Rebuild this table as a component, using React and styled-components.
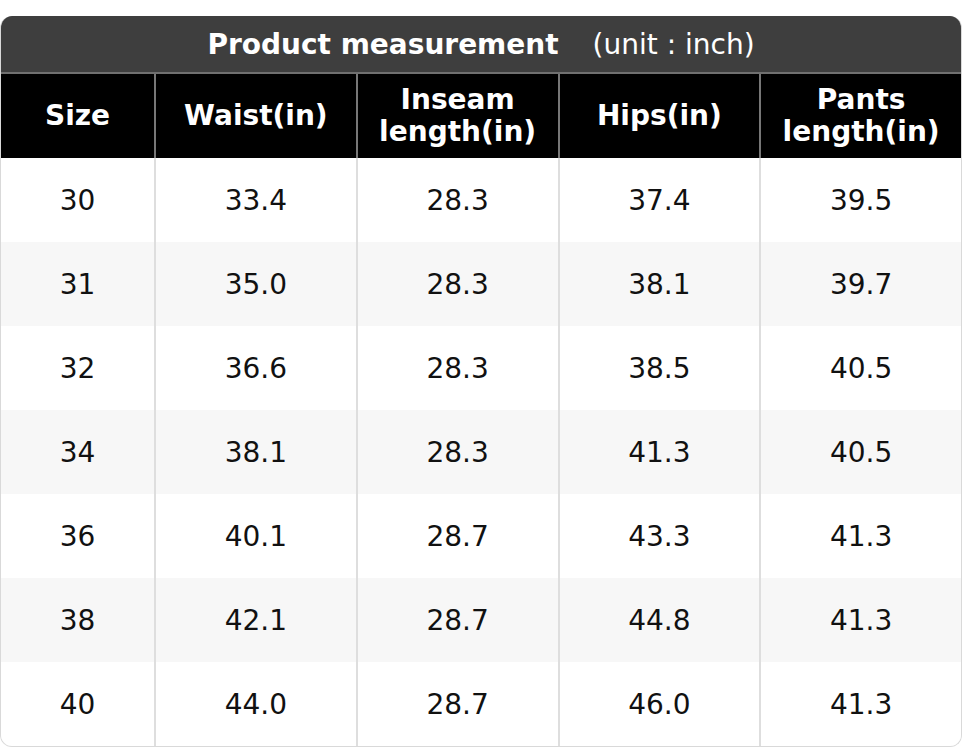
import React from "react";
import styled, { createGlobalStyle } from "styled-components";

const GlobalStyle = createGlobalStyle`
  body {
    margin: 0;
    background: #ffffff;
    font-family: "DejaVu Sans", Verdana, sans-serif;
  }
`;

const rows = [
    ["30", "33.4", "28.3", "37.4", "39.5"],
    ["31", "35.0", "28.3", "38.1", "39.7"],
    ["32", "36.6", "28.3", "38.5", "40.5"],
    ["34", "38.1", "28.3", "41.3", "40.5"],
    ["36", "40.1", "28.7", "43.3", "41.3"],
    ["38", "42.1", "28.7", "44.8", "41.3"],
    ["40", "44.0", "28.7", "46.0", "41.3"]
];

const headers = [
    ["Size"],
    ["Waist(in)"],
    ["Inseam", "length(in)"],
    ["Hips(in)"],
    ["Pants", "length(in)"]
];

const Page = styled.div`
  padding-top: 16px;
`;

const Table = styled.div`
  width: 962px;
  box-sizing: border-box;
  border: 1px solid #d9d9d9;
  border-top: none;
  border-radius: 12px;
  overflow: hidden;
`;

const TitleBar = styled.div`
  height: 56px;
  background: #3e3e3e;
  color: #ffffff;
  display: flex;
  justify-content: center;
  align-items: center;
  font-size: 28px;
  border-bottom: 2px solid #707070;
`;

const TitleMain = styled.span`
  font-weight: bold;
`;

const TitleUnit = styled.span`
  margin-left: 34px;
`;

const Row = styled.div`
  display: grid;
  grid-template-columns: 153px repeat(4, 1fr);
  column-gap: 2px;
  height: 84px;
  background: ${(p) => (p.$head ? "#777777" : "#dedede")};
`;

const HeadCell = styled.div`
  background: #000000;
  color: #ffffff;
  font-weight: bold;
  font-size: 28px;
  line-height: 32px;
  display: flex;
  flex-direction: column;
  justify-content: center;
  align-items: center;
  text-align: center;
`;

const Cell = styled.div`
  background: ${(p) => (p.$alt ? "#f7f7f7" : "#ffffff")};
  color: #111111;
  font-size: 28px;
  display: flex;
  justify-content: center;
  align-items: center;
`;

const App = () => {
    return (
        <Page>
            <GlobalStyle/>
            <Table>
                <TitleBar>
                    <TitleMain>Product measurement</TitleMain>
                    <TitleUnit>(unit : inch)</TitleUnit>
                </TitleBar>
                <Row $head>
                    {headers.map((h, i) => (
                        <HeadCell key={i}>
                            {h.map((line) => <span key={line}>{line}</span>)}
                        </HeadCell>
                    ))}
                </Row>
                {rows.map((r, i) => (
                    <Row key={r[0]}>
                        {r.map((v, j) => (
                            <Cell key={j} $alt={i % 2 === 1}>{v}</Cell>
                        ))}
                    </Row>
                ))}
            </Table>
        </Page>
    );
};

export default App;
